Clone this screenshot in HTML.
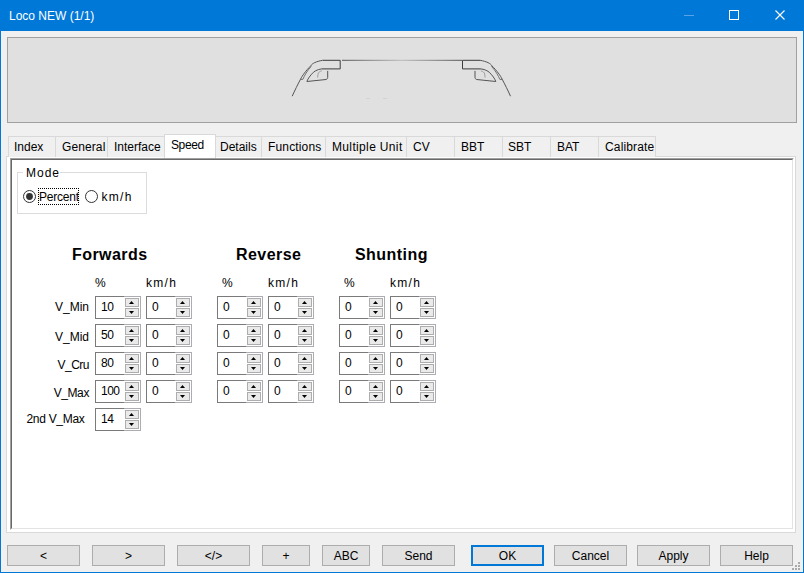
<!DOCTYPE html><html><head><meta charset="utf-8"><style>
*{margin:0;padding:0;box-sizing:border-box}
html,body{width:804px;height:573px;overflow:hidden;background:#F0F0F0;font-family:"Liberation Sans",sans-serif;font-size:12px;color:#000}
.abs{position:absolute}
.t{position:absolute;white-space:nowrap;line-height:14px}
.tab{position:absolute;top:136px;height:21px;background:#F0F0F0;border:1px solid #D9D9D9;border-bottom:none}
.spin{position:absolute;width:46px;height:23px}
.spin .ed{position:absolute;left:0;top:0;width:46px;height:23px;border:1px solid #7A7A7A;background:#fff}
.spin .ud{position:absolute;left:29px;top:0;width:17px;height:23px;border:1px solid #ABADB3;border-left:none;background:#fff}
.spin .b{position:absolute;left:1px;width:14px;height:9px;border:1px solid #ADADAD;background:#EAEAEA}
.spin .v{position:absolute;left:6px;top:4px;line-height:14px;letter-spacing:-0.5px}
.btn{position:absolute;top:545px;height:21px;border:1px solid #ADADAD;background:#E1E1E1;text-align:center;line-height:19px;padding-top:1px}
</style></head><body>
<div class="abs" style="left:0;top:0;width:804px;height:31px;background:#0078D7"></div>
<div class="abs" style="left:0;top:0;width:1px;height:573px;background:#0078D7"></div>
<div class="abs" style="left:803px;top:0;width:1px;height:573px;background:#0078D7"></div>
<div class="abs" style="left:0;top:572px;width:804px;height:1px;background:#0078D7"></div>
<div class="t" style="left:9px;top:9px;color:#fff">Loco NEW (1/1)</div>
<div class="abs" style="left:684px;top:15px;width:10px;height:1px;background:#5BA3E6"></div>
<div class="abs" style="left:729px;top:10px;width:10px;height:10px;border:1px solid #fff"></div>
<svg class="abs" style="left:774px;top:9px" width="12" height="12"><path d="M1.5 1.5L10.5 10.5M10.5 1.5L1.5 10.5" stroke="#fff" stroke-width="1.1"/></svg>
<div class="abs" style="left:7px;top:37px;width:790px;height:86px;border:1px solid #A0A0A0;background:#E0E0E0"></div>
<svg class="abs" style="left:0;top:0" width="804" height="130"><defs><linearGradient id="lg" x1="0" x2="1"><stop offset="0" stop-color="#555"/><stop offset="0.5" stop-color="#bbb"/><stop offset="1" stop-color="#555"/></linearGradient></defs><g><path d="M322.6 60.3 L340.2 60.3 L340.2 68.9 L321.8 68.9" fill="none" stroke="#3c3c3c" stroke-width="1"/><path d="M322.6 60.3 C316 61.5 312 63.5 310.8 65.8 C306 70.5 302 76 300.6 79.1 C298 84 294.5 91 292.2 96.2" fill="none" stroke="#555" stroke-width="1"/><path d="M311.2 66.4 C307 71 304.5 75.5 302.9 79.3 L300.6 79.5" fill="none" stroke="#666" stroke-width="0.9"/><path d="M321.8 68.9 C317.5 69.3 313.5 71.5 311.6 74.2 C309.5 76.5 307.5 79.5 306.9 81.5 L326 79.5 C327.3 79 327.7 78.3 327.7 77.4 L327.7 70.9" fill="none" stroke="#555" stroke-width="1"/><path d="M321.8 70.9 C319.5 71.3 318.3 72.5 318 74 L317.6 77.6" fill="none" stroke="#999" stroke-width="0.9"/></g><g transform="translate(802.7,0) scale(-1,1)"><path d="M322.6 60.3 L340.2 60.3 L340.2 68.9 L321.8 68.9" fill="none" stroke="#3c3c3c" stroke-width="1"/><path d="M322.6 60.3 C316 61.5 312 63.5 310.8 65.8 C306 70.5 302 76 300.6 79.1 C298 84 294.5 91 292.2 96.2" fill="none" stroke="#555" stroke-width="1"/><path d="M311.2 66.4 C307 71 304.5 75.5 302.9 79.3 L300.6 79.5" fill="none" stroke="#666" stroke-width="0.9"/><path d="M321.8 68.9 C317.5 69.3 313.5 71.5 311.6 74.2 C309.5 76.5 307.5 79.5 306.9 81.5 L326 79.5 C327.3 79 327.7 78.3 327.7 77.4 L327.7 70.9" fill="none" stroke="#555" stroke-width="1"/><path d="M321.8 70.9 C319.5 71.3 318.3 72.5 318 74 L317.6 77.6" fill="none" stroke="#999" stroke-width="0.9"/></g><rect x="342" y="59.8" width="120" height="1" fill="url(#lg)"/><rect x="366" y="98" width="4" height="1" fill="#d2d2d2"/><rect x="383" y="98" width="4" height="1" fill="#d2d2d2"/></svg>
<div class="abs" style="left:6px;top:156px;width:790px;height:377px;border:1px solid #D9D9D9;background:#fff"></div>
<div class="tab" style="left:8px;width:48px"></div>
<div class="t" style="left:14px;top:140px;letter-spacing:0">Index</div>
<div class="tab" style="left:55px;width:53px"></div>
<div class="t" style="left:62px;top:140px;letter-spacing:0.1px">General</div>
<div class="tab" style="left:107px;width:58px"></div>
<div class="t" style="left:114px;top:140px;letter-spacing:0">Interface</div>
<div class="tab" style="left:215px;width:47px"></div>
<div class="t" style="left:220px;top:140px;letter-spacing:0">Details</div>
<div class="tab" style="left:261px;width:65px"></div>
<div class="t" style="left:268px;top:140px;letter-spacing:0.15px">Functions</div>
<div class="tab" style="left:325px;width:82px"></div>
<div class="t" style="left:332px;top:140px;letter-spacing:0.35px">Multiple Unit</div>
<div class="tab" style="left:406px;width:49px"></div>
<div class="t" style="left:413px;top:140px;letter-spacing:0">CV</div>
<div class="tab" style="left:454px;width:49px"></div>
<div class="t" style="left:461px;top:140px;letter-spacing:0">BBT</div>
<div class="tab" style="left:502px;width:49px"></div>
<div class="t" style="left:508px;top:140px;letter-spacing:0">SBT</div>
<div class="tab" style="left:550px;width:49px"></div>
<div class="t" style="left:557px;top:140px;letter-spacing:0">BAT</div>
<div class="tab" style="left:598px;width:58px"></div>
<div class="t" style="left:605px;top:140px;letter-spacing:0.15px">Calibrate</div>
<div class="abs" style="left:164px;top:134px;width:52px;height:24px;border:1px solid #D9D9D9;border-bottom:none;background:#fff"></div>
<div class="t" style="left:171px;top:138px;letter-spacing:-0.4px">Speed</div>
<div class="abs" style="left:10px;top:158px;width:784px;height:372px;border-top:1px solid #A0A0A0;border-left:1px solid #A0A0A0;border-right:1px solid #fff;border-bottom:1px solid #fff"></div>
<div class="abs" style="left:11px;top:159px;width:782px;height:370px;border-top:1px solid #696969;border-left:1px solid #696969;border-right:1px solid #E3E3E3;border-bottom:1px solid #E3E3E3;background:#fff"></div>
<div class="abs" style="left:17px;top:172px;width:130px;height:42px;border:1px solid #DCDCDC"></div>
<div class="abs" style="left:23px;top:168px;width:37px;height:8px;background:#fff"></div>
<div class="t" style="left:26px;top:166px;letter-spacing:1px">Mode</div>
<svg class="abs" style="left:22px;top:190px" width="14" height="14"><circle cx="7.5" cy="6.5" r="6" fill="#fff" stroke="#333" stroke-width="1"/><circle cx="7.5" cy="6.5" r="3.4" fill="#333"/></svg>
<div class="abs" style="left:38px;top:188px;width:41px;height:17px;border:1px dotted #000"></div>
<div class="t" style="left:39px;top:190px;letter-spacing:-0.2px">Percent</div>
<svg class="abs" style="left:84px;top:190px" width="14" height="14"><circle cx="7.5" cy="6.5" r="6" fill="#fff" stroke="#333" stroke-width="1"/></svg>
<div class="t" style="left:101.5px;top:190px;letter-spacing:1.3px">km/h</div>
<div class="t" style="left:72px;top:246px;font-size:16px;font-weight:bold;line-height:18px;letter-spacing:0.45px">Forwards</div>
<div class="t" style="left:236px;top:246px;font-size:16px;font-weight:bold;line-height:18px;letter-spacing:0.45px">Reverse</div>
<div class="t" style="left:355px;top:246px;font-size:16px;font-weight:bold;line-height:18px;letter-spacing:0.45px">Shunting</div>
<div class="t" style="left:95px;top:276px;letter-spacing:1px">%</div>
<div class="t" style="left:146px;top:276px;letter-spacing:1.3px">km/h</div>
<div class="t" style="left:222px;top:276px;letter-spacing:1px">%</div>
<div class="t" style="left:268px;top:276px;letter-spacing:1.3px">km/h</div>
<div class="t" style="left:344px;top:276px;letter-spacing:1px">%</div>
<div class="t" style="left:390px;top:276px;letter-spacing:1.3px">km/h</div>
<div class="t" style="right:715px;top:300px;letter-spacing:0">V_Min</div>
<div class="spin" style="left:95px;top:296px"><div class="ed"></div><div class="ud"><div class="b" style="top:1px"></div><div class="b" style="top:11px"></div></div><svg class="abs" style="left:34px;top:5px" width="5" height="3"><path d="M0 3L2.5 0L5 3Z" fill="#000"/></svg><svg class="abs" style="left:34px;top:15px" width="5" height="3"><path d="M0 0L2.5 3L5 0Z" fill="#000"/></svg><div class="v">10</div></div>
<div class="spin" style="left:146px;top:296px"><div class="ed"></div><div class="ud"><div class="b" style="top:1px"></div><div class="b" style="top:11px"></div></div><svg class="abs" style="left:34px;top:5px" width="5" height="3"><path d="M0 3L2.5 0L5 3Z" fill="#000"/></svg><svg class="abs" style="left:34px;top:15px" width="5" height="3"><path d="M0 0L2.5 3L5 0Z" fill="#000"/></svg><div class="v">0</div></div>
<div class="spin" style="left:217px;top:296px"><div class="ed"></div><div class="ud"><div class="b" style="top:1px"></div><div class="b" style="top:11px"></div></div><svg class="abs" style="left:34px;top:5px" width="5" height="3"><path d="M0 3L2.5 0L5 3Z" fill="#000"/></svg><svg class="abs" style="left:34px;top:15px" width="5" height="3"><path d="M0 0L2.5 3L5 0Z" fill="#000"/></svg><div class="v">0</div></div>
<div class="spin" style="left:268px;top:296px"><div class="ed"></div><div class="ud"><div class="b" style="top:1px"></div><div class="b" style="top:11px"></div></div><svg class="abs" style="left:34px;top:5px" width="5" height="3"><path d="M0 3L2.5 0L5 3Z" fill="#000"/></svg><svg class="abs" style="left:34px;top:15px" width="5" height="3"><path d="M0 0L2.5 3L5 0Z" fill="#000"/></svg><div class="v">0</div></div>
<div class="spin" style="left:339px;top:296px"><div class="ed"></div><div class="ud"><div class="b" style="top:1px"></div><div class="b" style="top:11px"></div></div><svg class="abs" style="left:34px;top:5px" width="5" height="3"><path d="M0 3L2.5 0L5 3Z" fill="#000"/></svg><svg class="abs" style="left:34px;top:15px" width="5" height="3"><path d="M0 0L2.5 3L5 0Z" fill="#000"/></svg><div class="v">0</div></div>
<div class="spin" style="left:390px;top:296px"><div class="ed"></div><div class="ud"><div class="b" style="top:1px"></div><div class="b" style="top:11px"></div></div><svg class="abs" style="left:34px;top:5px" width="5" height="3"><path d="M0 3L2.5 0L5 3Z" fill="#000"/></svg><svg class="abs" style="left:34px;top:15px" width="5" height="3"><path d="M0 0L2.5 3L5 0Z" fill="#000"/></svg><div class="v">0</div></div>
<div class="t" style="right:715px;top:330px;letter-spacing:0">V_Mid</div>
<div class="spin" style="left:95px;top:324px"><div class="ed"></div><div class="ud"><div class="b" style="top:1px"></div><div class="b" style="top:11px"></div></div><svg class="abs" style="left:34px;top:5px" width="5" height="3"><path d="M0 3L2.5 0L5 3Z" fill="#000"/></svg><svg class="abs" style="left:34px;top:15px" width="5" height="3"><path d="M0 0L2.5 3L5 0Z" fill="#000"/></svg><div class="v">50</div></div>
<div class="spin" style="left:146px;top:324px"><div class="ed"></div><div class="ud"><div class="b" style="top:1px"></div><div class="b" style="top:11px"></div></div><svg class="abs" style="left:34px;top:5px" width="5" height="3"><path d="M0 3L2.5 0L5 3Z" fill="#000"/></svg><svg class="abs" style="left:34px;top:15px" width="5" height="3"><path d="M0 0L2.5 3L5 0Z" fill="#000"/></svg><div class="v">0</div></div>
<div class="spin" style="left:217px;top:324px"><div class="ed"></div><div class="ud"><div class="b" style="top:1px"></div><div class="b" style="top:11px"></div></div><svg class="abs" style="left:34px;top:5px" width="5" height="3"><path d="M0 3L2.5 0L5 3Z" fill="#000"/></svg><svg class="abs" style="left:34px;top:15px" width="5" height="3"><path d="M0 0L2.5 3L5 0Z" fill="#000"/></svg><div class="v">0</div></div>
<div class="spin" style="left:268px;top:324px"><div class="ed"></div><div class="ud"><div class="b" style="top:1px"></div><div class="b" style="top:11px"></div></div><svg class="abs" style="left:34px;top:5px" width="5" height="3"><path d="M0 3L2.5 0L5 3Z" fill="#000"/></svg><svg class="abs" style="left:34px;top:15px" width="5" height="3"><path d="M0 0L2.5 3L5 0Z" fill="#000"/></svg><div class="v">0</div></div>
<div class="spin" style="left:339px;top:324px"><div class="ed"></div><div class="ud"><div class="b" style="top:1px"></div><div class="b" style="top:11px"></div></div><svg class="abs" style="left:34px;top:5px" width="5" height="3"><path d="M0 3L2.5 0L5 3Z" fill="#000"/></svg><svg class="abs" style="left:34px;top:15px" width="5" height="3"><path d="M0 0L2.5 3L5 0Z" fill="#000"/></svg><div class="v">0</div></div>
<div class="spin" style="left:390px;top:324px"><div class="ed"></div><div class="ud"><div class="b" style="top:1px"></div><div class="b" style="top:11px"></div></div><svg class="abs" style="left:34px;top:5px" width="5" height="3"><path d="M0 3L2.5 0L5 3Z" fill="#000"/></svg><svg class="abs" style="left:34px;top:15px" width="5" height="3"><path d="M0 0L2.5 3L5 0Z" fill="#000"/></svg><div class="v">0</div></div>
<div class="t" style="right:715px;top:358px;letter-spacing:-0.5px">V_Cru</div>
<div class="spin" style="left:95px;top:352px"><div class="ed"></div><div class="ud"><div class="b" style="top:1px"></div><div class="b" style="top:11px"></div></div><svg class="abs" style="left:34px;top:5px" width="5" height="3"><path d="M0 3L2.5 0L5 3Z" fill="#000"/></svg><svg class="abs" style="left:34px;top:15px" width="5" height="3"><path d="M0 0L2.5 3L5 0Z" fill="#000"/></svg><div class="v">80</div></div>
<div class="spin" style="left:146px;top:352px"><div class="ed"></div><div class="ud"><div class="b" style="top:1px"></div><div class="b" style="top:11px"></div></div><svg class="abs" style="left:34px;top:5px" width="5" height="3"><path d="M0 3L2.5 0L5 3Z" fill="#000"/></svg><svg class="abs" style="left:34px;top:15px" width="5" height="3"><path d="M0 0L2.5 3L5 0Z" fill="#000"/></svg><div class="v">0</div></div>
<div class="spin" style="left:217px;top:352px"><div class="ed"></div><div class="ud"><div class="b" style="top:1px"></div><div class="b" style="top:11px"></div></div><svg class="abs" style="left:34px;top:5px" width="5" height="3"><path d="M0 3L2.5 0L5 3Z" fill="#000"/></svg><svg class="abs" style="left:34px;top:15px" width="5" height="3"><path d="M0 0L2.5 3L5 0Z" fill="#000"/></svg><div class="v">0</div></div>
<div class="spin" style="left:268px;top:352px"><div class="ed"></div><div class="ud"><div class="b" style="top:1px"></div><div class="b" style="top:11px"></div></div><svg class="abs" style="left:34px;top:5px" width="5" height="3"><path d="M0 3L2.5 0L5 3Z" fill="#000"/></svg><svg class="abs" style="left:34px;top:15px" width="5" height="3"><path d="M0 0L2.5 3L5 0Z" fill="#000"/></svg><div class="v">0</div></div>
<div class="spin" style="left:339px;top:352px"><div class="ed"></div><div class="ud"><div class="b" style="top:1px"></div><div class="b" style="top:11px"></div></div><svg class="abs" style="left:34px;top:5px" width="5" height="3"><path d="M0 3L2.5 0L5 3Z" fill="#000"/></svg><svg class="abs" style="left:34px;top:15px" width="5" height="3"><path d="M0 0L2.5 3L5 0Z" fill="#000"/></svg><div class="v">0</div></div>
<div class="spin" style="left:390px;top:352px"><div class="ed"></div><div class="ud"><div class="b" style="top:1px"></div><div class="b" style="top:11px"></div></div><svg class="abs" style="left:34px;top:5px" width="5" height="3"><path d="M0 3L2.5 0L5 3Z" fill="#000"/></svg><svg class="abs" style="left:34px;top:15px" width="5" height="3"><path d="M0 0L2.5 3L5 0Z" fill="#000"/></svg><div class="v">0</div></div>
<div class="t" style="right:715px;top:386px;letter-spacing:-0.4px">V_Max</div>
<div class="spin" style="left:95px;top:380px"><div class="ed"></div><div class="ud"><div class="b" style="top:1px"></div><div class="b" style="top:11px"></div></div><svg class="abs" style="left:34px;top:5px" width="5" height="3"><path d="M0 3L2.5 0L5 3Z" fill="#000"/></svg><svg class="abs" style="left:34px;top:15px" width="5" height="3"><path d="M0 0L2.5 3L5 0Z" fill="#000"/></svg><div class="v">100</div></div>
<div class="spin" style="left:146px;top:380px"><div class="ed"></div><div class="ud"><div class="b" style="top:1px"></div><div class="b" style="top:11px"></div></div><svg class="abs" style="left:34px;top:5px" width="5" height="3"><path d="M0 3L2.5 0L5 3Z" fill="#000"/></svg><svg class="abs" style="left:34px;top:15px" width="5" height="3"><path d="M0 0L2.5 3L5 0Z" fill="#000"/></svg><div class="v">0</div></div>
<div class="spin" style="left:217px;top:380px"><div class="ed"></div><div class="ud"><div class="b" style="top:1px"></div><div class="b" style="top:11px"></div></div><svg class="abs" style="left:34px;top:5px" width="5" height="3"><path d="M0 3L2.5 0L5 3Z" fill="#000"/></svg><svg class="abs" style="left:34px;top:15px" width="5" height="3"><path d="M0 0L2.5 3L5 0Z" fill="#000"/></svg><div class="v">0</div></div>
<div class="spin" style="left:268px;top:380px"><div class="ed"></div><div class="ud"><div class="b" style="top:1px"></div><div class="b" style="top:11px"></div></div><svg class="abs" style="left:34px;top:5px" width="5" height="3"><path d="M0 3L2.5 0L5 3Z" fill="#000"/></svg><svg class="abs" style="left:34px;top:15px" width="5" height="3"><path d="M0 0L2.5 3L5 0Z" fill="#000"/></svg><div class="v">0</div></div>
<div class="spin" style="left:339px;top:380px"><div class="ed"></div><div class="ud"><div class="b" style="top:1px"></div><div class="b" style="top:11px"></div></div><svg class="abs" style="left:34px;top:5px" width="5" height="3"><path d="M0 3L2.5 0L5 3Z" fill="#000"/></svg><svg class="abs" style="left:34px;top:15px" width="5" height="3"><path d="M0 0L2.5 3L5 0Z" fill="#000"/></svg><div class="v">0</div></div>
<div class="spin" style="left:390px;top:380px"><div class="ed"></div><div class="ud"><div class="b" style="top:1px"></div><div class="b" style="top:11px"></div></div><svg class="abs" style="left:34px;top:5px" width="5" height="3"><path d="M0 3L2.5 0L5 3Z" fill="#000"/></svg><svg class="abs" style="left:34px;top:15px" width="5" height="3"><path d="M0 0L2.5 3L5 0Z" fill="#000"/></svg><div class="v">0</div></div>
<div class="t" style="left:26.5px;top:412px;letter-spacing:-0.3px">2nd V_Max</div>
<div class="spin" style="left:95px;top:408px"><div class="ed"></div><div class="ud"><div class="b" style="top:1px"></div><div class="b" style="top:11px"></div></div><svg class="abs" style="left:34px;top:5px" width="5" height="3"><path d="M0 3L2.5 0L5 3Z" fill="#000"/></svg><svg class="abs" style="left:34px;top:15px" width="5" height="3"><path d="M0 0L2.5 3L5 0Z" fill="#000"/></svg><div class="v">14</div></div>
<div class="btn" style="left:7px;width:73px;">&lt;</div>
<div class="btn" style="left:92px;width:73px;">&gt;</div>
<div class="btn" style="left:177px;width:73px;">&lt;/&gt;</div>
<div class="btn" style="left:262px;width:48px;">+</div>
<div class="btn" style="left:322px;width:48px;">ABC</div>
<div class="btn" style="left:382px;width:73px;">Send</div>
<div class="btn" style="left:471px;width:73px;border:2px solid #0078D7;line-height:17px;padding-top:1px;">OK</div>
<div class="btn" style="left:554px;width:73px;">Cancel</div>
<div class="btn" style="left:637px;width:73px;">Apply</div>
<div class="btn" style="left:720px;width:73px;">Help</div>
<div class="abs" style="left:798px;top:562px;width:2px;height:2px;background:#ABABAB"></div>
<div class="abs" style="left:795px;top:565px;width:2px;height:2px;background:#ABABAB"></div>
<div class="abs" style="left:798px;top:565px;width:2px;height:2px;background:#ABABAB"></div>
<div class="abs" style="left:792px;top:568px;width:2px;height:2px;background:#ABABAB"></div>
<div class="abs" style="left:795px;top:568px;width:2px;height:2px;background:#ABABAB"></div>
<div class="abs" style="left:798px;top:568px;width:2px;height:2px;background:#ABABAB"></div>
</body></html>
